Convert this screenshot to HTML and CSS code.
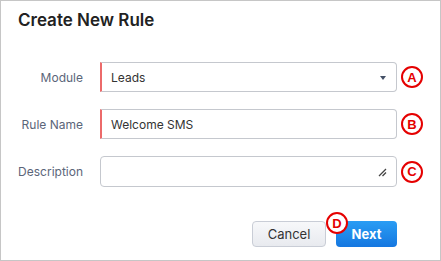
FILE: index.html
```html
<html lang="en">
<head>
  <meta charset="UTF-8" />
  <title>Create New Rule</title>
  <link rel="stylesheet" href="styles.css">
</head>
<body>
  <div class="dialog">
    <h1 class="title">Create New Rule</h1>

    <form class="rule-form">
      <div class="row">
        <label class="label" for="module">Module</label>
        <div class="field required select">
          <span class="value">Leads</span>
          <span class="caret"></span>
        </div>
        <span class="marker">A</span>
      </div>

      <div class="row">
        <label class="label" for="ruleName">Rule Name</label>
        <div class="field required">
          <span class="value">Welcome SMS</span>
        </div>
        <span class="marker">B</span>
      </div>

      <div class="row">
        <label class="label" for="description">Description</label>
        <div class="field textarea">
          <svg class="grip" width="9" height="9" viewBox="0 0 9 9">
            <path d="M1 8 L8 1 M4.5 8 L8 4.5" stroke="#444" stroke-width="1.3" fill="none"/>
          </svg>
        </div>
        <span class="marker">C</span>
      </div>

      <div class="actions">
        <button type="button" class="btn cancel-btn">Cancel</button>
        <div class="next-wrap">
          <button type="submit" class="btn next-btn">Next</button>
          <span class="marker marker-d">D</span>
        </div>
      </div>
    </form>
  </div>
</body>
</html>
```

FILE: styles.css
```css
body {
  margin: 0;
  padding: 0;
  background-color: #fff;
  font-family: 'Inter', 'Noto Sans', sans-serif;
}

.dialog {
  width: 441px;
  height: 261px;
  box-sizing: border-box;
  border: 1px solid #c6c6c6;
  background-color: #fff;
}

.title {
  margin: 0;
  padding: 8px 0 0 17px;
  font-size: 17px;
  font-weight: 600;
  color: #222;
  line-height: 22px;
}

.rule-form {
  padding-top: 31px;
}

.row {
  display: flex;
  align-items: center;
  margin-bottom: 17px;
}

.label {
  width: 82px;
  margin-right: 17px;
  text-align: right;
  font-size: 12px;
  color: #5b6579;
}

.field {
  position: relative;
  display: flex;
  align-items: center;
  width: 297px;
  height: 30px;
  box-sizing: border-box;
  border: 1px solid #c5c8ce;
  border-radius: 4px;
  padding-left: 9px;
  font-size: 12px;
  color: #333;
}

.required {
  border-left: 2px solid #ec6a6a;
  border-radius: 0 4px 4px 0;
}

.caret {
  position: absolute;
  right: 10px;
  top: 13px;
  border-left: 3px solid transparent;
  border-right: 3px solid transparent;
  border-top: 4px solid #445066;
}

.textarea {
  height: 31px;
}

.grip {
  position: absolute;
  right: 9px;
  bottom: 9px;
}

.marker {
  display: flex;
  align-items: center;
  justify-content: center;
  width: 22px;
  height: 22px;
  box-sizing: border-box;
  margin-left: 4px;
  border: 2.5px solid #e50000;
  border-radius: 50%;
  background-color: #fff;
  color: #e50000;
  font-family: 'Liberation Sans', sans-serif;
  font-size: 13px;
  font-weight: 700;
}

.actions {
  display: flex;
  justify-content: flex-end;
  gap: 10px;
  padding-right: 43px;
  margin-top: 34px;
}

.btn {
  height: 26px;
  border-radius: 4px;
  font-family: 'Inter', sans-serif;
  font-size: 13px;
  cursor: pointer;
}

.cancel-btn {
  width: 74px;
  border: 1px solid #c9cdd6;
  background: linear-gradient(#f7f8fa, #e8eaef);
  color: #333;
}

.next-wrap {
  position: relative;
}

.next-btn {
  width: 61px;
  border: none;
  background: linear-gradient(#2a9df4, #1577e0);
  color: #fff;
  font-weight: 700;
}

.marker-d {
  position: absolute;
  left: -10px;
  top: -9px;
  margin-left: 0;
}
```
